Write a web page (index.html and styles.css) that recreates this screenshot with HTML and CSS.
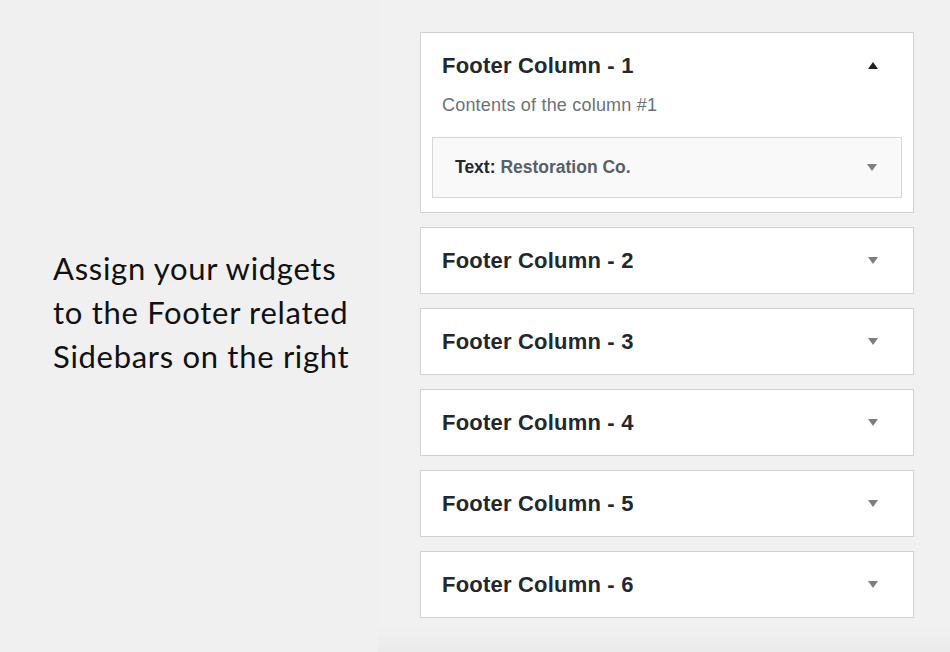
FILE: index.html
```html
<!DOCTYPE html>
<html lang="en">
<head>
    <meta charset="UTF-8">
    <meta name="viewport" content="width=device-width, initial-scale=1.0">
    <title>Footer Widgets</title>
    <link rel="stylesheet" href="styles.css">
</head>
<body>

    <div class="wrap">
        <div class="intro">
            <p>Assign your widgets<br>to the Footer related<br>Sidebars on the right</p>
        </div>

        <div class="screen">
            <div class="panel open">
                <div class="panel-head">
                    <h3>Footer Column - 1</h3>
                    <span class="arrow up"></span>
                </div>
                <p class="desc">Contents of the column #1</p>
                <div class="widget">
                    <span><b>Text:</b> Restoration Co.</span>
                    <span class="arrow"></span>
                </div>
            </div>

            <div class="panel">
                <div class="panel-head">
                    <h3>Footer Column - 2</h3>
                    <span class="arrow"></span>
                </div>
            </div>

            <div class="panel">
                <div class="panel-head">
                    <h3>Footer Column - 3</h3>
                    <span class="arrow"></span>
                </div>
            </div>

            <div class="panel">
                <div class="panel-head">
                    <h3>Footer Column - 4</h3>
                    <span class="arrow"></span>
                </div>
            </div>

            <div class="panel">
                <div class="panel-head">
                    <h3>Footer Column - 5</h3>
                    <span class="arrow"></span>
                </div>
            </div>

            <div class="panel">
                <div class="panel-head">
                    <h3>Footer Column - 6</h3>
                    <span class="arrow"></span>
                </div>
            </div>
        </div>
    </div>

</body>
</html>
```

FILE: styles.css
```css
body {
    margin: 0;
    background-color: #f0f0f0;
    font-family: "Liberation Sans", Arial, sans-serif;
    overflow: hidden;
}

.wrap {
    display: flex;
    height: 652px;
}

.intro {
    width: 325px;
    padding-left: 53px;
    padding-top: 246px;
}

.intro p {
    margin: 0;
    font-family: Lato, sans-serif;
    font-size: 31px;
    line-height: 44px;
    letter-spacing: 0.7px;
    color: #111;
}

.screen {
    flex: 1;
    padding: 32px 36px 0 42px;
    background: linear-gradient(to bottom, #f1f1f1 0, #f1f1f1 625px, #ebebeb 652px);
}

.panel {
    background: #fff;
    border: 1px solid #cfd2d5;
    margin-bottom: 14px;
}

.panel-head {
    display: flex;
    align-items: center;
    justify-content: space-between;
    padding: 20px 35px 20px 21px;
}

.panel-head h3 {
    margin: 0;
    font-size: 22px;
    line-height: 25px;
    letter-spacing: 0.2px;
    color: #23282d;
}

.open .panel-head {
    padding-bottom: 0;
}

.desc {
    margin: 15px 21px 0;
    font-size: 18px;
    line-height: 24px;
    letter-spacing: 0.2px;
    color: #6c7177;
}

.widget {
    display: flex;
    align-items: center;
    justify-content: space-between;
    margin: 20px 11px 14px;
    height: 59px;
    padding: 0 24px 0 22px;
    background: #f9f9f9;
    border: 1px solid #d4d6d9;
    font-size: 17.5px;
    font-weight: bold;
    color: #585f66;
}

.widget b {
    color: #23282d;
}

.arrow {
    width: 0;
    height: 0;
    border-left: 5px solid transparent;
    border-right: 5px solid transparent;
    border-top: 7px solid #7b7f84;
}

.arrow.up {
    border-top: 0;
    border-bottom: 7px solid #1d2327;
}
```
